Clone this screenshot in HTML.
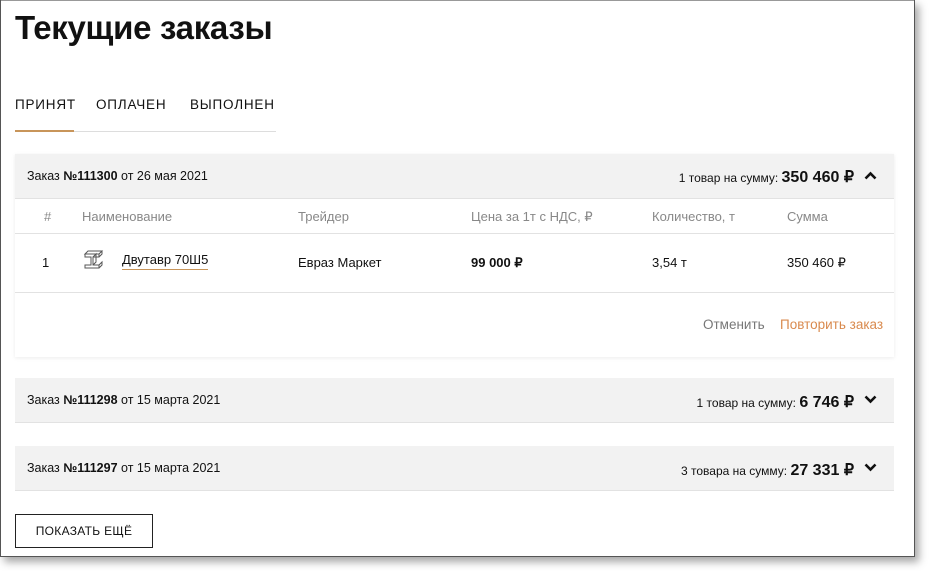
<!DOCTYPE html>
<html><head><meta charset="utf-8"><style>
*{margin:0;padding:0;box-sizing:border-box}
body{width:929px;height:571px;background:#fff;font-family:"Liberation Sans",sans-serif;color:#111;position:relative;overflow:hidden}
.win{position:absolute;left:0;top:0;width:915px;height:557px;background:#fff;box-shadow:inset 1px 0 0 #555,inset -1px -1px 0 #555,inset 0 1px 0 #999,4px 5px 8px rgba(0,0,0,.35)}
.a{position:absolute;white-space:nowrap}
.h1{left:15px;top:9px;font-size:33px;font-weight:bold;letter-spacing:-0.3px}
.tab{top:97px;font-size:13.5px;letter-spacing:0.8px}
.hdr{position:absolute;left:15px;width:879px;height:45px;background:#f2f2f2;border-bottom:1px solid #e2e2e2}
.hdr .l{position:absolute;left:12px;top:15px;font-size:12.5px}
.hdr .r{position:absolute;right:40px;top:13px;font-size:12px}
.hdr .r b{font-size:16px;margin-left:0px}
.chev{position:absolute;right:17px;top:17px}
.th{top:209px;font-size:13px;color:#888}
.td{top:255px;font-size:13px}
</style></head><body>
<div class="win">
<div class="a h1">Текущие заказы</div>
<div class="a tab" style="left:15px">ПРИНЯТ</div>
<div class="a tab" style="left:96px">ОПЛАЧЕН</div>
<div class="a tab" style="left:190px">ВЫПОЛНЕН</div>
<div class="a" style="left:15px;top:131px;width:261px;height:1px;background:#ddd"></div>
<div class="a" style="left:15px;top:130px;width:59px;height:2px;background:#c8955a"></div>

<div class="a" style="left:15px;top:154px;width:879px;height:203px;box-shadow:0 1px 4px rgba(0,0,0,.08)"></div>
<div class="hdr" style="top:154px"><div class="l">Заказ <b>№111300</b> от 26 мая 2021</div><div class="r">1 товар на сумму: <b>350 460 ₽</b></div>
<svg class="chev" width="13" height="9" viewBox="0 0 13 9"><path d="M1.5 7.5L6.5 2.5L11.5 7.5" stroke="#111" stroke-width="2.6" fill="none"/></svg></div>
<div class="a th" style="left:44px">#</div>
<div class="a th" style="left:82px">Наименование</div>
<div class="a th" style="left:298px">Трейдер</div>
<div class="a th" style="left:471px">Цена за 1т с НДС, ₽</div>
<div class="a th" style="left:652px">Количество, т</div>
<div class="a th" style="left:787px">Сумма</div>
<div class="a" style="left:15px;top:233px;width:879px;height:1px;background:#e2e2e2"></div>
<div class="a td" style="left:42px">1</div>
<svg class="a" style="left:83px;top:250px" width="21" height="22" viewBox="0 0 21 22" fill="none" stroke="#555" stroke-width="1"><path d="M2 4h14l3-3H5zM2 4v3h6v8H2v3h14v-3h-6V7h6V4M16 18l3-3v-3l-3 3M19 1v3l-3 3M10 7l3-3v8l-3 3"/></svg>
<div class="a td" style="left:122px;top:252px;border-bottom:1px solid #c8955a;padding-bottom:2px">Двутавр 70Ш5</div>
<div class="a td" style="left:298px">Евраз Маркет</div>
<div class="a td" style="left:471px;font-weight:bold">99 000 ₽</div>
<div class="a td" style="left:652px">3,54 т</div>
<div class="a td" style="left:787px">350 460 ₽</div>
<div class="a" style="left:15px;top:292px;width:879px;height:1px;background:#e2e2e2"></div>
<div class="a" style="left:703px;top:317px;font-size:13.5px;color:#777">Отменить</div>
<div class="a" style="left:780px;top:317px;font-size:13.5px;color:#d98a4e">Повторить заказ</div>

<div class="hdr" style="top:378px"><div class="l">Заказ <b>№111298</b> от 15 марта 2021</div><div class="r" style="top:14px">1 товар на сумму: <b>6 746 ₽</b></div>
<svg class="chev" style="top:17px" width="13" height="9" viewBox="0 0 13 9"><path d="M1.5 1.5L6.5 6.5L11.5 1.5" stroke="#111" stroke-width="2.6" fill="none"/></svg></div>
<div class="hdr" style="top:446px"><div class="l">Заказ <b>№111297</b> от 15 марта 2021</div><div class="r" style="top:14px">3 товара на сумму: <b>27 331 ₽</b></div>
<svg class="chev" style="top:17px" width="13" height="9" viewBox="0 0 13 9"><path d="M1.5 1.5L6.5 6.5L11.5 1.5" stroke="#111" stroke-width="2.6" fill="none"/></svg></div>

<div class="a" style="left:15px;top:514px;width:138px;height:34px;border:1px solid #222;font-size:12px;text-align:center;line-height:32px;letter-spacing:0.3px">ПОКАЗАТЬ ЕЩЁ</div>
</div>
</body></html>
